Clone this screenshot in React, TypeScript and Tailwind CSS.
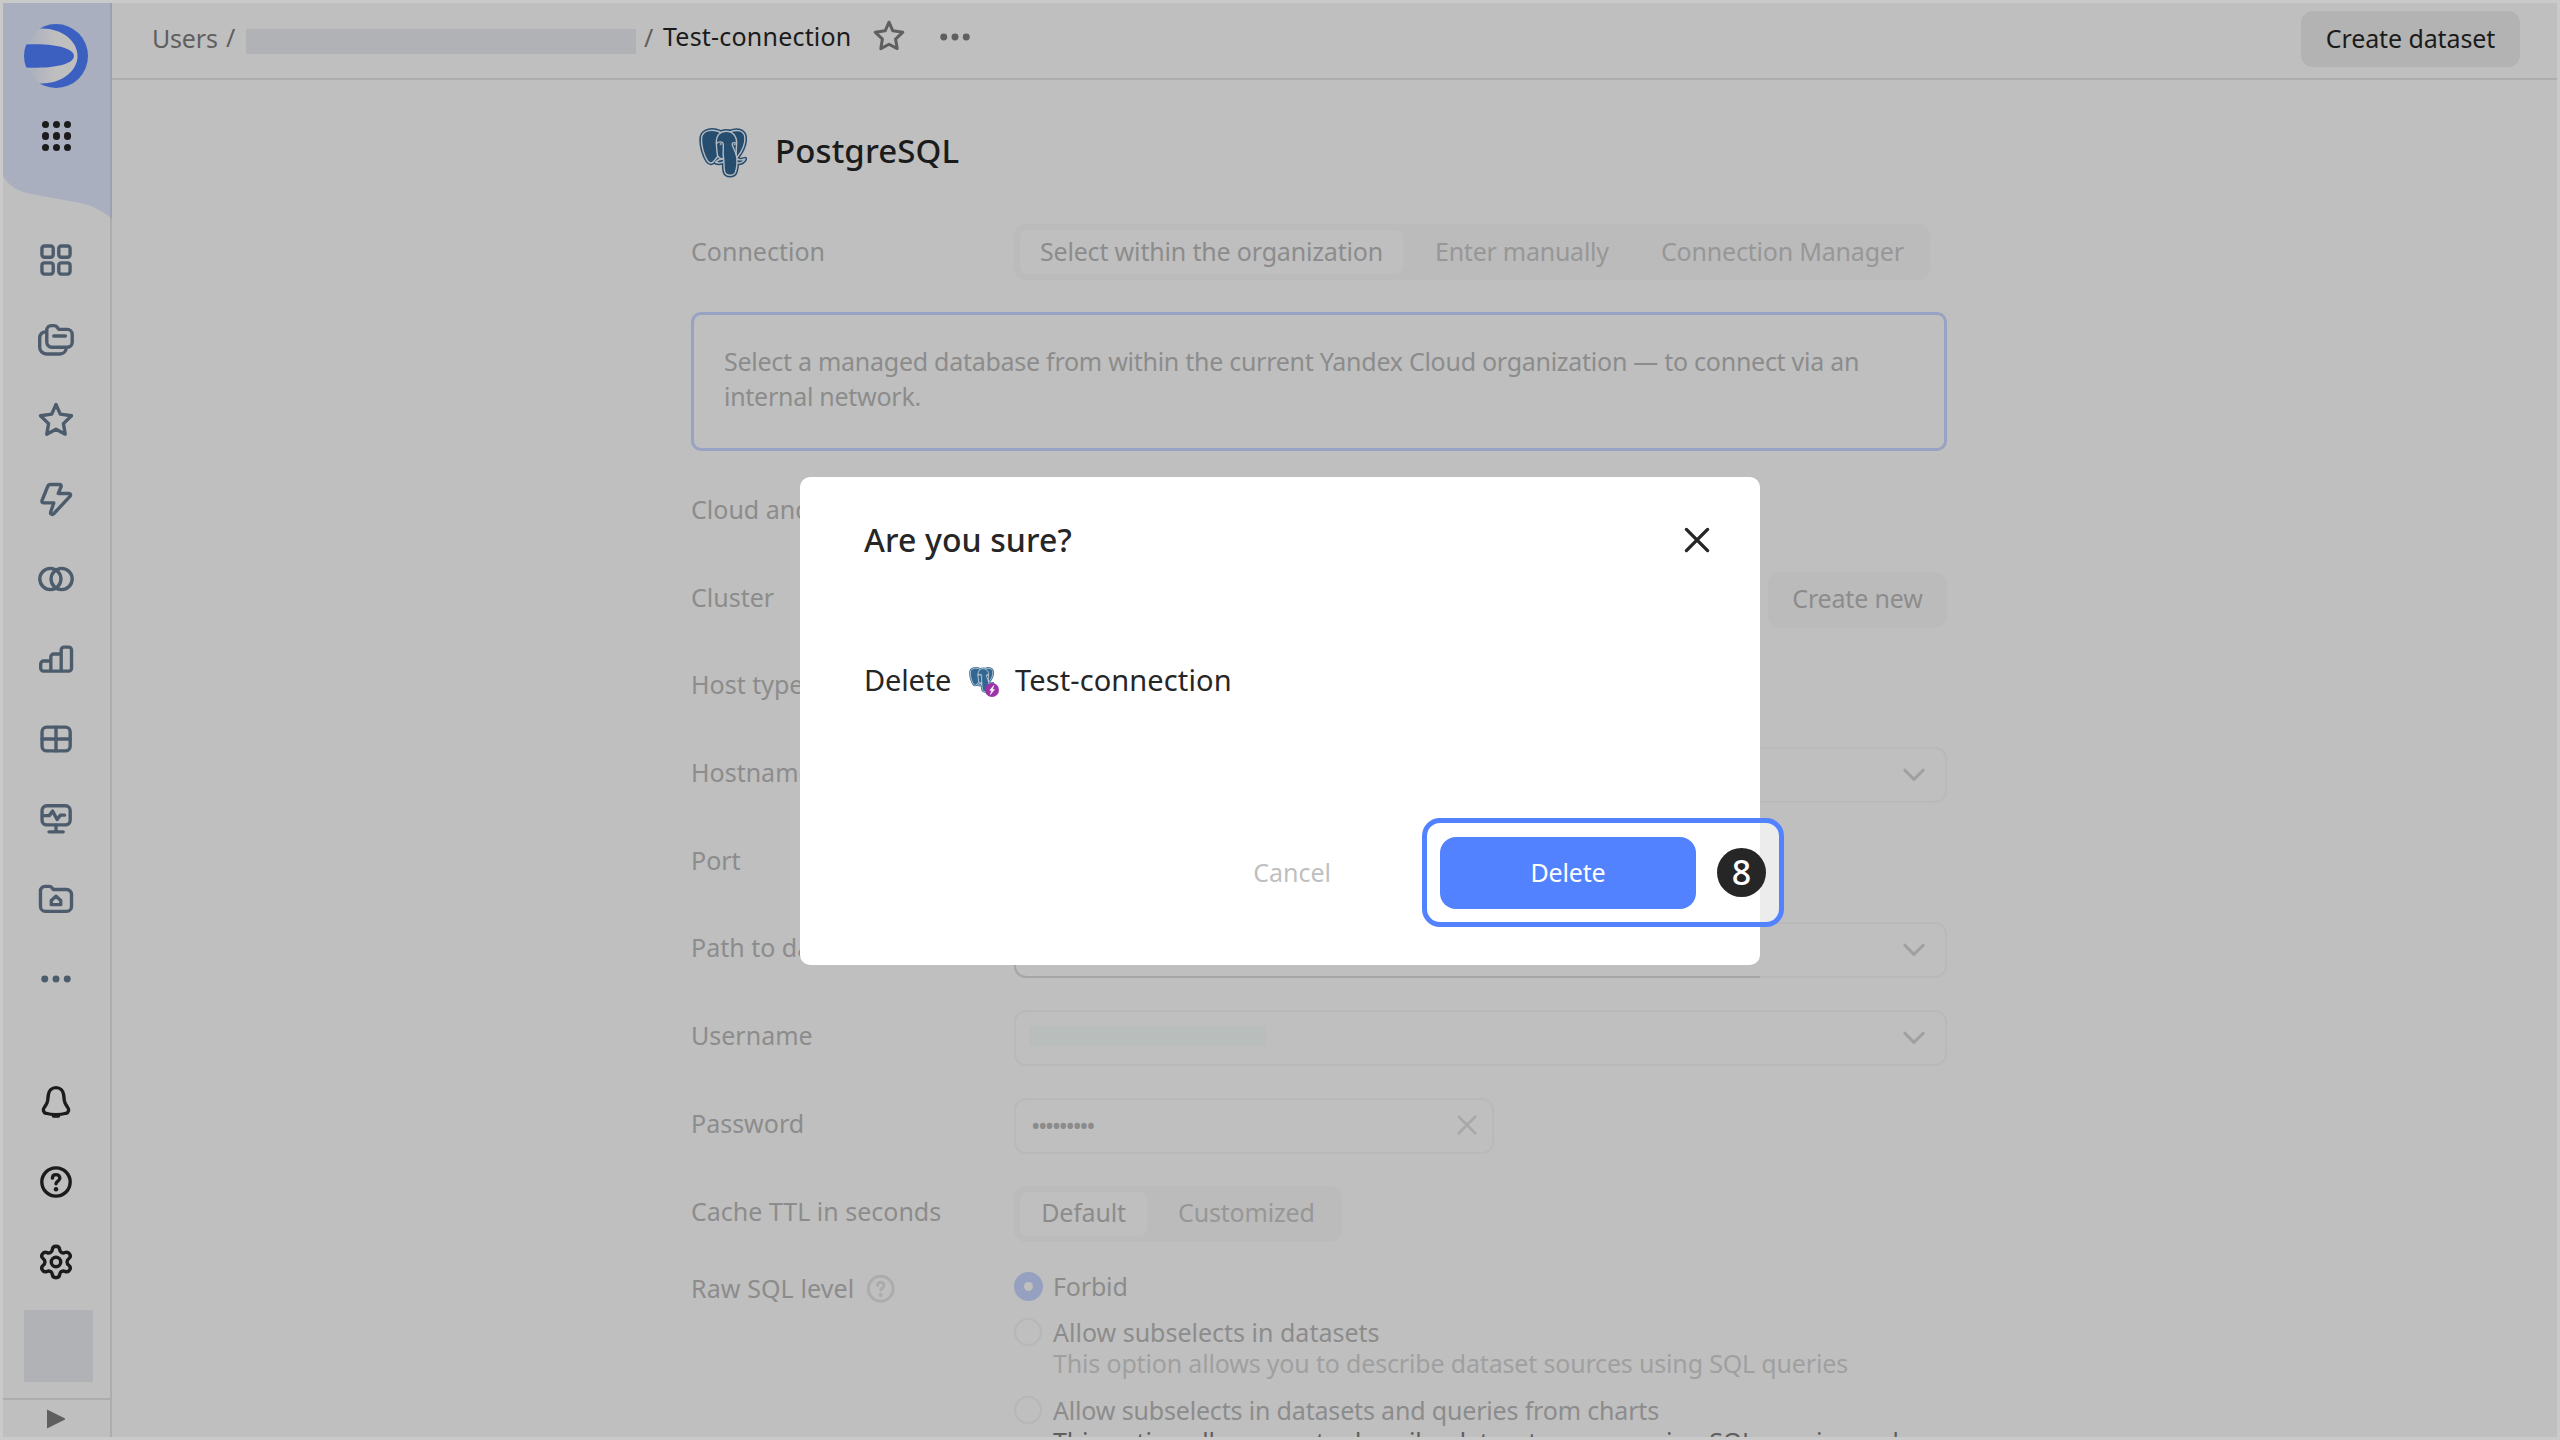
import React from 'react';
import { Settings } from 'lucide-react';

type IconProps = { className?: string; children: React.ReactNode };

/** 16-unit outline icon. */
function Icon({ className = 'size-9', children }: IconProps) {
  return (
    <svg
      viewBox="0 0 16 16"
      className={`shrink-0 overflow-visible ${className}`}
      fill="none"
      stroke="currentColor"
      strokeWidth={1.5}
      strokeLinecap="round"
      strokeLinejoin="round"
    >
      {children}
    </svg>
  );
}

const Star = ({ className }: { className?: string }) => (
  <Icon className={className}>
    <path d="M8 1.1 9.9 5.4 14.9 6.1 11.3 9.6 12.1 14.3 8 12.1 3.9 14.3 4.7 9.6 1.1 6.1 6.1 5.4Z" />
  </Icon>
);

const Dots = ({ className }: { className?: string }) => (
  <Icon className={className}>
    {[3, 8, 13].map((x) => (
      <circle key={x} cx={x} cy="8" r="1.55" fill="currentColor" stroke="none" />
    ))}
  </Icon>
);

const Help = ({ className }: { className?: string }) => (
  <Icon className={className}>
    <circle cx="8" cy="8" r="6.3" />
    <path d="M6.4 6.3c0-1 .7-1.6 1.6-1.6s1.7.6 1.7 1.6c0 1.3-1.7 1.3-1.7 2.5" />
    <circle cx="8" cy="11.2" r="1" fill="currentColor" stroke="none" />
  </Icon>
);

const Cross = ({ className }: { className?: string }) => (
  <Icon className={className}>
    <path d="m3.3 3.3 9.4 9.4M12.7 3.3 3.3 12.7" />
  </Icon>
);

const Chevron = () => (
  <svg
    viewBox="0 0 24 14"
    className="mr-[19px] h-[14px] w-6 text-[#a0a0a0]"
    fill="none"
    stroke="currentColor"
    strokeWidth={3}
    strokeLinecap="round"
    strokeLinejoin="round"
  >
    <path d="m2.8 2.2 9.2 9.2 9.2-9.2" />
  </svg>
);

/** PostgreSQL elephant: dark rim, light contour lines and a solid body. */
function Elephant({ className, body, line }: { className: string; body: string; line: string }) {
  const leftEar = 'M21 4C14 1 4 1.500 2.600 9.500 1.800 17 5 28 8.600 33 10.800 36 13.500 35.500 15.500 32.500L19 28z';
  const rightEar = 'M31 3.800C38 1 45 2.500 45.800 9 46.500 16 42.500 24 38 29.500L33 24z';
  const head =
    'M17.300 15C17 7 21.500 3.200 27 3.200 34 3.200 38 8.500 37.600 16 37.300 22 36.500 25 37.800 30 38.200 35 37.500 41 36.400 44.200 34.500 48.300 27.300 48.300 25.800 44 24.600 40 25.300 35 24.600 30.500 22 31.200 19 30 18.400 27 17.800 23 17.500 19 17.300 15z';
  const jaws = 'M24.600 31C21.500 30.800 18.500 32 16.500 34.200 19.500 35.600 23.500 35 25 33.200M38 31C40.500 32.200 43.500 32 46 31 44.500 34 41 35.300 38 35';
  return (
    <svg viewBox="0 0 48 50" className={className} strokeLinejoin="round" strokeLinecap="round">
      <g fill={body} stroke={body} strokeWidth={4.4}>
        <path d={leftEar} />
        <path d={rightEar} />
        <path d={head} />
        <path d={jaws} />
      </g>
      <g fill={body} stroke={line} strokeWidth={1.4}>
        <path d={leftEar} />
        <path d={rightEar} />
        <path d={jaws} />
        <path d={head} />
        <path d="M17.500 15.500C20 13 24 13.500 24.300 16 24.600 20 23.500 25 24.600 30.500M37.500 15.500C35.500 14 33.300 14.600 33.200 16 33.400 19.500 36.500 23 37.200 27" fill="none" />
        <circle cx="21.600" cy="16" r=".8" fill={line} strokeWidth={0.4} />
        <circle cx="35.600" cy="16.400" r=".6" fill={line} strokeWidth={0.4} />
      </g>
    </svg>
  );
}

const navIcons: React.ReactNode[] = [
  <Icon>
    <rect x="1.75" y="1.75" width="5" height="5" rx="1.1" />
    <rect x="9.25" y="1.75" width="5" height="5" rx="1.1" />
    <rect x="1.75" y="9.25" width="5" height="5" rx="1.1" />
    <rect x="9.25" y="9.25" width="5" height="5" rx="1.1" />
  </Icon>,
  <Icon>
    <path d="M3.9 3.6a2 2 0 0 1 2-2h1.2c.6 0 1.1.3 1.5.8l.6.9h3.8a2.2 2.2 0 0 1 2.2 2.2v3.5a2.2 2.2 0 0 1-2.2 2.2H6.1A2.2 2.2 0 0 1 3.9 9z" />
    <path d="M7 6.2h5.2M3.4 4.4A2.6 2.6 0 0 0 .75 7v4.2a3 3 0 0 0 3 3h6a2.8 2.8 0 0 0 2.8-2.5" />
  </Icon>,
  <Star />,
  <Icon>
    <path d="M5.5 1.1h4.1c.5 0 .8.4.7.9L9 5.1h4.7c.8 0 1 .7.5 1.3L7 14.1c-.6.7-1.6.2-1.4-.6L7 9.3H2.6c-.7 0-1-.5-.8-1.1l2.5-6.2c.2-.5.6-.9 1.2-.9z" />
  </Icon>,
  <Icon>
    <circle cx="5.5" cy="8" r="4.7" />
    <circle cx="10.5" cy="8" r="4.7" />
  </Icon>,
  <Icon>
    <path d="M5.7 13.4H2.5a1.3 1.3 0 0 1-1.3-1.3v-1.9a1.3 1.3 0 0 1 1.3-1.3h3.2M10.3 13.4H5.7V7.1A1.3 1.3 0 0 1 7 5.8h3.3M10.3 13.4V4a1.3 1.3 0 0 1 1.3-1.3h2A1.3 1.3 0 0 1 14.9 4v8.1a1.3 1.3 0 0 1-1.3 1.3z" />
  </Icon>,
  <Icon>
    <rect x="1.8" y="2.7" width="12.5" height="10.6" rx="2.1" />
    <path d="M1.8 8h12.5M8 2.7v10.6" />
  </Icon>,
  <Icon>
    <rect x="1.8" y="2.100" width="12.5" height="8.5" rx="2.1" />
    <path d="M8 10.7v2.8M4.9 13.7h6.3M2 6.5h3l1.5-2 2 3.7 1.4-1.9h1.9" />
  </Icon>,
  <Icon>
    <path d="M1.1 4.4a2 2 0 0 1 2-2h1.8c.6 0 1.1.3 1.5.8l.5.6h5.8a2.2 2.2 0 0 1 2.2 2.2v5.3a2.2 2.2 0 0 1-2.2 2.2H3.3a2.2 2.2 0 0 1-2.2-2.2z" />
    <path d="M8 6.8 10.1 8.7v1.8H5.9V8.7z" />
  </Icon>,
  <Dots />,
];

const Bell = () => (
  <Icon>
    <path d="M8 1.6c-1.9 0-3.2 1.4-3.4 3.2l-.3 2.5c-.2 1.4-.9 2.2-1.5 3.1-.7 1-.5 2.3.7 2.6 1.4.4 2.9.6 4.5.6s3.1-.2 4.5-.6c1.2-.3 1.4-1.6.7-2.6-.6-.9-1.3-1.7-1.5-3.1l-.3-2.5C11.2 3 9.9 1.6 8 1.6z" />
    <path d="M6.2 13.7h3.6a1.9 1.5 0 0 1-3.6 0z" fill="currentColor" stroke="none" />
    <path d="M7 14.2h2" strokeWidth={1.7} />
  </Icon>
);

function Logo() {
  return (
    <svg viewBox="0 0 64 64" className="size-16">
      <defs>
        <linearGradient id="shine" x1="0" x2="1">
          <stop offset="0.05" stopColor="#a9afbf" />
          <stop offset="0.5" stopColor="#bfbfbf" />
        </linearGradient>
        <clipPath id="disc">
          <circle cx="32" cy="32" r="32" />
        </clipPath>
      </defs>
      <g clipPath="url(#disc)">
        <circle cx="32" cy="32" r="31.500" fill="url(#shine)" />
        <path d="M16 0V4.600H18C38 4.600 53.500 17 53.500 32S38 59.400 18 59.400H16V64H64V0z" fill="#3c60c0" />
        <path d="M0 20.600C8 20.300 20 20 28 21.200 41 22.800 50 26.500 50 32S41 41.200 28 42.800C20 44 8 43.700 0 43.400z" fill="#3c60c0" />
      </g>
    </svg>
  );
}

function Sidebar() {
  return (
    <aside className="relative flex w-[109px] shrink-0 flex-col items-center border-r-2 border-[#adadad] pr-px text-[#4c5c6c]">
      <svg viewBox="0 0 109 217" className="absolute top-0 left-0 h-[217px] w-[109px]">
        <path d="M0 0H109V216C98 207 88 201.500 72 199L26 190.500C14 188 6 183 0 173z" fill="#a9afbf" />
        <path d="M107 0h2v216l-2-1.700z" fill="#9ba1b1" />
      </svg>
      <div className="relative mt-[21px]">
        <Logo />
      </div>
      <div className="relative mt-[33px] ml-px grid grid-cols-3 gap-x-[4px] gap-y-[4px]">
        {Array.from({ length: 9 }, (_, i) => (
          <span key={i} className="size-[7.300px] rounded-full bg-[#1b1b1b]" />
        ))}
      </div>
      <nav className="mt-[91px] flex flex-col gap-[43.900px]">
        {navIcons.map((icon, i) => (
          <React.Fragment key={i}>{icon}</React.Fragment>
        ))}
      </nav>
      <div className="mt-[87px] flex flex-col items-center gap-[44px] text-[#1b1b1b]">
        <Bell />
        <Help />
        <Settings className="-mt-px size-[38px]" strokeWidth={2.15} />
      </div>
      <div className="mt-[29px] mr-[-5px] h-[72px] w-[69px] bg-[#b0b2b5]" />
      <div className="mt-auto mr-[-1px] flex h-[39px] w-[107px] items-center justify-center border-t-2 border-[#adadad] pr-[2px]">
        <svg viewBox="0 0 20 20" className="size-5">
          <path d="M1 .6 18.600 9.200a.9.900 0 0 1 0 1.600L1 19.400z" fill="#5f5f5f" />
        </svg>
      </div>
    </aside>
  );
}

function Header() {
  return (
    <header className="flex h-[77px] shrink-0 items-start border-b-2 border-[#adadad] pr-[37px] pl-[40px]">
      <span className="mt-[10px] w-[74px] leading-[50px] tracking-[-0.2px] text-[#5f5f5f]">Users</span>
      <span className="mt-[9px] w-[20px] leading-[50px] text-[#5f5f5f]">/</span>
      <span className="mt-[26px] h-[25px] w-[390px] bg-[#b0b2b5]" />
      <span className="mt-[9px] ml-[8px] w-[19px] leading-[50px] text-[#5f5f5f]">/</span>
      <span className="mt-[8px] leading-[50px] tracking-[0.2px] text-[#1b1b1b]">Test-connection</span>
      <span className="mt-[17px] ml-[22px] text-[#5f5f5f]">
        <Star className="size-8" />
      </span>
      <span className="mt-[16px] ml-[32px] text-[#5f5f5f]">
        <Dots className="size-9" />
      </span>
      <button className="mt-[8px] ml-auto h-[56px] w-[219px] rounded-xl bg-[#b3b3b3] tracking-[-0.1px] text-[#1b1b1b]">
        Create dataset
      </button>
    </header>
  );
}

function Segmented({ className, children }: { className: string; children: React.ReactNode }) {
  return (
    <div className={`flex h-[56px] shrink-0 items-stretch rounded-xl bg-[#bbbbbb] p-[6px] text-[#979797] ${className}`}>
      {children}
    </div>
  );
}

function Field({ className, children }: { className: string; children?: React.ReactNode }) {
  return (
    <div className={`relative flex h-[56px] shrink-0 items-center rounded-xl border-2 border-[#b9b9b9] ${className}`}>
      {children}
    </div>
  );
}

function Row({ label, children }: { label: string; children?: React.ReactNode }) {
  return (
    <div className="flex h-[87.700px] shrink-0">
      <div className="w-[323px] shrink-0 leading-[51px] tracking-[0px] whitespace-nowrap">{label}</div>
      {children}
    </div>
  );
}

const Radio = () => <span className="size-[28px] shrink-0 rounded-full border-2 border-[#b7b7b7]" />;

function ConnectionForm() {
  return (
    <main className="ml-[579px] flex w-[1256px] flex-col text-[#8c8c8c]">
      <div className="mt-[46px] flex h-[54px] items-center">
        <Elephant className="ml-[8px] h-[50px] w-[48px]" body="#264d6e" line="#b4bac0" />
        <h1 className="mb-[5px] ml-[28px] text-[33px] leading-[48px] font-medium tracking-[0.1px] text-[#1b1b1b]">PostgreSQL</h1>
      </div>
      <div className="mt-[44px] flex h-[56px] items-center">
        <div className="w-[323px] tracking-[0px]">Connection</div>
        <Segmented className="w-[916px]">
          <div className="flex w-[383px] items-center justify-center rounded-lg bg-[#bfbfbf] text-[#8c8c8c]">Select within the organization</div>
          <div className="ml-[32px] flex w-[226px] items-center tracking-[-0.25px]">Enter manually</div>
          <div className="flex items-center tracking-[-0.2px]">Connection Manager</div>
        </Segmented>
      </div>
      <div className="mt-[32px] h-[139px] rounded-[10px] border-3 border-[#98a2c2] px-[30px] pt-[29px] leading-[35px] tracking-[-0.27px]">
        Select a managed database from within the current Yandex Cloud organization — to connect via an
        <br />
        internal network.
      </div>
      <div className="mt-[33px] flex flex-col">
        <Row label="Cloud and folder" />
        <Row label="Cluster">
          <button className="ml-auto h-[56px] w-[179px] rounded-xl bg-[#bbbbbb] pb-[2px]">Create new</button>
        </Row>
        <Row label="Host type" />
        <Row label="Hostname">
          <Field className="w-[933px] justify-end">
            <Chevron />
          </Field>
        </Row>
        <Row label="Port" />
        <Row label="Path to database">
          <Field className="w-[933px] justify-end">
            <div className="absolute -bottom-[2px] -left-[2px] h-[40px] w-[746px] rounded-bl-xl border-b-2 border-l-2 border-[#a6a6a6]" />
            <Chevron />
          </Field>
        </Row>
        <Row label="Username">
          <Field className="w-[933px] justify-between">
            <span className="mb-1 ml-[13px] h-[20px] w-[237px] bg-[#b9bdbb]" />
            <Chevron />
          </Field>
        </Row>
        <Row label="Password">
          <Field className="w-[480px] justify-between">
            <span className="ml-[15px] tracking-[-2.500px]">•••••••••</span>
            <span className="mr-[11px] mb-[2px] text-[#a8a8a8]">
              <Cross className="size-7" />
            </span>
          </Field>
        </Row>
        <Row label="Cache TTL in seconds">
          <Segmented className="w-[328px]">
            <div className="flex w-[127px] items-center justify-center rounded-lg bg-[#bfbfbf] pb-[2px] text-[#8c8c8c]">Default</div>
            <div className="ml-[31px] flex items-center pb-[2px]">Customized</div>
          </Segmented>
        </Row>
      </div>
      <div className="flex">
        <div className="flex h-[31px] w-[323px] shrink-0 items-center tracking-[0.1px]">
          Raw SQL level
          <span className="ml-[11px] text-[#acacac]">
            <Help className="size-[31.500px]" />
          </span>
        </div>
        <div className="flex flex-col leading-[32px] whitespace-nowrap">
          <div className="-mt-px flex h-[28px] items-center">
            <span className="flex size-[29px] shrink-0 items-center justify-center rounded-full bg-[#96a1c2]">
              <span className="size-[9px] rounded-full bg-[#bfbfbf]" />
            </span>
            <span className="ml-[10px]">Forbid</span>
          </div>
          <div className="mt-[18px] flex h-[28px] items-center">
            <Radio />
            <span className="ml-[11px] tracking-[0px]">Allow subselects in datasets</span>
          </div>
          <p className="mt-px ml-[39px] text-[#a0a0a0]">
            This option allows you to describe dataset sources using SQL queries
          </p>
          <div className="mt-[17px] flex h-[28px] items-center">
            <Radio />
            <span className="ml-[11px]">Allow subselects in datasets and queries from charts</span>
          </div>
          <p className="mt-px ml-[39px] text-[#5f5f5f]">
            This option allows you to describe dataset sources using SQL queries and
          </p>
        </div>
      </div>
    </main>
  );
}

function DeleteDialog() {
  return (
    <div className="absolute top-[477px] left-[800px] flex h-[488px] w-[960px] flex-col rounded-[10px] bg-white text-[#262626]">
      <div className="mt-[38px] flex h-[50px] items-center justify-between pr-[45px] pl-[64px]">
        <h2 className="text-[32px] font-medium tracking-[0.1px]">Are you sure?</h2>
        <Cross className="size-9" />
      </div>
      <div className="mt-[90px] flex h-[50px] items-center pl-[64px] text-[29px]">
        <span className="w-[105px]">Delete</span>
        <span className="relative mt-1 size-[30px]">
          <Elephant className="h-[26px] w-[25px]" body="#336791" line="#dbe4eb" />
          <span className="absolute right-0 bottom-0 flex size-[14px] items-center justify-center rounded-full bg-[#9c33a8]">
            <svg viewBox="0 0 14 14" className="size-[14px]">
              <path d="M8.800 2.500 4.800 7.300h2L5.400 11.500 9.400 6.600h-2z" fill="#fff" stroke="#fff" strokeWidth=".6" />
            </svg>
          </span>
        </span>
        <span className="ml-[16px] tracking-[0.100px]">Test-connection</span>
      </div>
      <div className="-mr-[24px] mt-[113px] flex h-[109px] items-center justify-end">
        <button className="mr-[91px] tracking-[0px] text-[#bfbfbf]">Cancel</button>
        <div className="flex h-[109px] w-[362px] items-center rounded-[18px] border-5 border-[#5282ff] bg-white/70 pl-[13px]">
          <button className="h-[72px] w-[256px] rounded-2xl bg-[#5282ff] text-white">Delete</button>
          <span className="ml-[21px] flex size-[49px] items-center justify-center rounded-full bg-[#262626] pb-px text-[34px] leading-none font-medium text-white">
            8
          </span>
        </div>
      </div>
    </div>
  );
}

export default function App() {
  return (
    <div className="relative h-[1440px] w-[2560px] overflow-hidden bg-[#cacaca] p-[3px] font-['Noto_Sans','Open_Sans',sans-serif] text-[25px] tracking-[-0.170px]">
      <div className="flex h-full w-full overflow-hidden bg-[#bfbfbf]">
        <Sidebar />
        <div className="flex min-w-0 grow flex-col">
          <Header />
          <ConnectionForm />
        </div>
      </div>
      <DeleteDialog />
    </div>
  );
}
